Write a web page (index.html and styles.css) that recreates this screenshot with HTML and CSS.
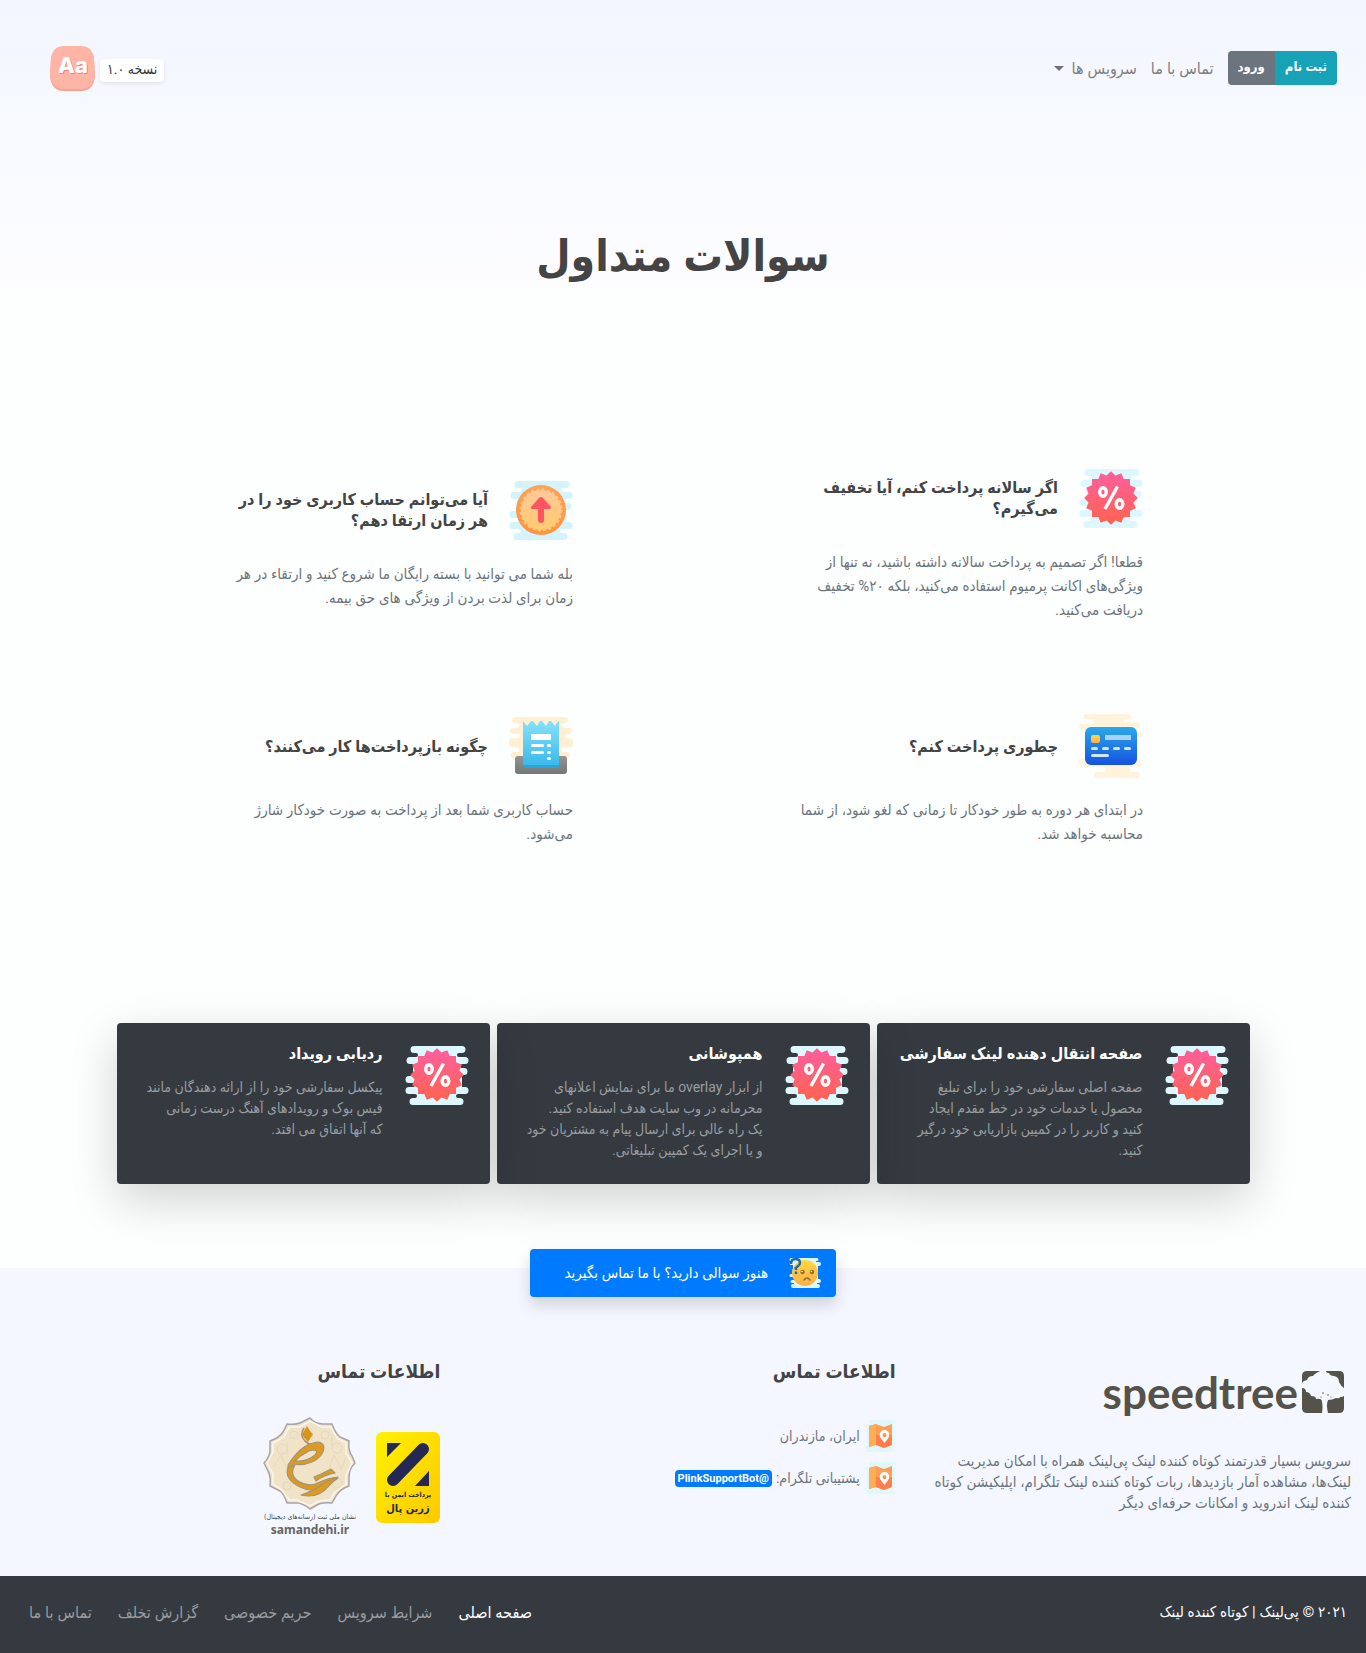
FILE: index.html
```html
<!DOCTYPE html>
<html lang="fa" dir="rtl">
<head>
<meta charset="utf-8">
<meta name="viewport" content="width=device-width, initial-scale=1">
<title>سوالات متداول</title>
<link rel="stylesheet" href="styles.css">
</head>
<body>
<svg class="defs" width="0" height="0" aria-hidden="true">
  <defs>
    <linearGradient id="pink" x1="0" y1="0" x2="0" y2="1"><stop offset="0" stop-color="#fc5fa0"/><stop offset="1" stop-color="#ff634d"/></linearGradient>
    <linearGradient id="orange" x1="0" y1="0" x2="0" y2="1"><stop offset="0" stop-color="#ffa352"/><stop offset="1" stop-color="#ff9245"/></linearGradient>
    <linearGradient id="peach" x1="0" y1="0" x2="0" y2="1"><stop offset="0" stop-color="#ffc99a"/><stop offset="1" stop-color="#ffcb70"/></linearGradient>
    <linearGradient id="blue" x1="0" y1="0" x2="0" y2="1"><stop offset="0" stop-color="#2ba8ec"/><stop offset="1" stop-color="#1552df"/></linearGradient>
    <linearGradient id="gold" x1="0" y1="0" x2="0" y2="1"><stop offset="0" stop-color="#ffd93b"/><stop offset="1" stop-color="#ffae4c"/></linearGradient>
    <linearGradient id="paper" x1="0" y1="0" x2="0" y2="1"><stop offset="0" stop-color="#86e1fb"/><stop offset="1" stop-color="#3cb9ea"/></linearGradient>
    <linearGradient id="grey" x1="0" y1="0" x2="0" y2="1"><stop offset="0" stop-color="#949494"/><stop offset="1" stop-color="#767676"/></linearGradient>
    <linearGradient id="yellow" x1="0" y1="0" x2="1" y2="1"><stop offset="0" stop-color="#fff200"/><stop offset="1" stop-color="#ffc800"/></linearGradient>
    <clipPath id="burst">
      <rect x="13" y="13" width="38" height="38"/>
      <rect x="13" y="13" width="38" height="38" transform="rotate(22.5 32 32)"/>
      <rect x="13" y="13" width="38" height="38" transform="rotate(45 32 32)"/>
      <rect x="13" y="13" width="38" height="38" transform="rotate(67.5 32 32)"/>
    </clipPath>
    <symbol id="cloud" viewBox="0 0 64 64">
      <path d="M9 3H57a3 3 0 0 1 0 7H54a2 2 0 0 0 0 4H60a3.500 3.500 0 0 1 0 7H57a2 2 0 0 0 0 4H59a3.500 3.500 0 0 1 0 7H57V44H60a3.500 3.500 0 0 1 0 7H53a2 2 0 0 0 0 4H55a3.500 3.500 0 0 1 0 7H8a3.500 3.500 0 0 1 0-7H10a2 2 0 0 0 0-4H4a3.500 3.500 0 0 1 0-7H8a2 2 0 0 0 0-4H4a3.500 3.500 0 0 1 0-7H8V21H5a3.500 3.500 0 0 1 0-7H11a2 2 0 0 0 0-4H9a3.500 3.500 0 0 1 0-7Z"/>
    </symbol>
    <symbol id="discount" viewBox="0 0 64 64">
      <use href="#cloud" fill="#ddf7fe"/>
      <g clip-path="url(#burst)"><rect x="4" y="4" width="56" height="56" fill="url(#pink)"/></g>
      <g fill="none" stroke="#fff" stroke-width="3.400"><ellipse cx="24" cy="26" rx="3.300" ry="4.300"/><ellipse cx="40.500" cy="38" rx="3.300" ry="4.300"/><path d="M38.500 20.500 26 43"/></g>
    </symbol>
    <symbol id="map" viewBox="0 0 32 32">
      <path fill="#dff8fe" d="M5 0H32V3H29V6H31V26H28V29H30V32H3V29H1V26H3V8H1V5H5Z"/>
      <path fill="#ff9d55" d="M5 6 12 4 20 7 28 4V25L20 28 12 25 5 27Z"/>
      <path fill="#ffad55" d="M5 6 12 4V25L5 27Z"/>
      <path fill="#ff7446" d="M12 15H28V25L20 28 12 25Z" opacity=".75"/>
      <path fill="#fff" fill-rule="evenodd" d="M20.500 10a4.800 4.800 0 0 0-4.800 5c0 3 3 5 4.800 8 1.800-3 4.800-5 4.800-8a4.800 4.800 0 0 0-4.800-5Zm0 3a2 2 0 1 1 0 4 2 2 0 0 1 0-4Z"/>
    </symbol>
  </defs>
</svg>

<header class="hero">
  <nav class="topbar">
    <div class="menu">
      <div class="auth">
        <button class="auth-btn signup" type="button">ثبت نام</button>
        <button class="auth-btn login" type="button">ورود</button>
      </div>
      <a class="menu-link" href="#contact">تماس با ما</a>
      <a class="menu-link has-caret" href="#services">سرویس ها</a>
    </div>
    <div class="brand">
      <span class="version">نسخه ۱.۰</span>
      <svg class="brand-icon" viewBox="0 0 45 45" role="img" aria-label="Aa">
        <path fill="#fa9f92" d="M14 1H31Q42 1 44 13L45 31Q43 45 31 45H14Q2 45 0 31L1 13Q3 1 14 1Z"/>
        <path fill="#ffb5a5" d="M14 0H31Q42 0 44 12L45 29Q43 43 31 43H14Q2 43 0 29L1 12Q3 0 14 0Z"/>
        <text class="aa-shadow" x="24" y="28" text-anchor="middle">Aa</text>
        <text class="aa" x="23" y="27" text-anchor="middle">Aa</text>
      </svg>
    </div>
  </nav>
  <h1 class="title">سوالات متداول</h1>
</header>

<main>
  <section class="faq">
    <article class="question">
      <div class="question-head">
        <svg class="icon" viewBox="0 0 64 64" aria-hidden="true"><use href="#discount"/></svg>
        <h2>اگر سالانه پرداخت کنم، آیا تخفیف<br>می‌گیرم؟</h2>
      </div>
      <p>قطعا! اگر تصمیم به پرداخت سالانه داشته باشید، نه تنها از<br>ویژگی‌های اکانت پرمیوم استفاده می‌کنید، بلکه ۲۰% تخفیف<br>دریافت می‌کنید.</p>
    </article>
    <article class="question">
      <div class="question-head">
        <svg class="icon" viewBox="0 0 64 64" aria-hidden="true">
          <use href="#cloud" fill="#d3f4fd"/>
          <circle cx="32" cy="32" r="25" fill="url(#orange)"/>
          <circle cx="32" cy="32" r="20" fill="url(#peach)"/>
          <circle cx="32" cy="32" r="20.500" fill="none" stroke="url(#peach)" stroke-width="2" stroke-dasharray="3 2.370"/>
          <path fill="#ff5560" d="M32 19Q33 19 34 20L42 29Q42 31 41 31H35V42a3 3 0 0 1-6 0V31H23Q21 30 22 29L30 20Q31 19 32 19Z"/>
        </svg>
        <h2>آیا می‌توانم حساب کاربری خود را در<br>هر زمان ارتقا دهم؟</h2>
      </div>
      <p>بله شما می توانید با بسته رایگان ما شروع کنید و ارتقاء در هر<br>زمان برای لذت بردن از ویژگی های حق بیمه.</p>
    </article>
    <article class="question">
      <div class="question-head">
        <svg class="icon" viewBox="0 0 64 64" aria-hidden="true">
          <path fill="#fff3dc" d="M7 0H50a2.500 2.500 0 0 1 0 5H46a1.500 1.500 0 0 0 0 3H58a3 3 0 0 1 0 6H55V18H61a2.500 2.500 0 0 1 0 5H55V45H58a4 4 0 0 1 0 8H53a2 2 0 0 0 0 5H58a3 3 0 0 1 0 6H18a3 3 0 0 1 0-6H24a2 2 0 0 0 0-5H4a4 4 0 0 1 0-8H9V16H3a3 3 0 0 1 0-6H12a2.500 2.500 0 0 0 0-5H7a2.500 2.500 0 0 1 0-5Z"/>
          <rect x="6" y="13" width="52" height="38" rx="6" fill="url(#blue)"/>
          <rect x="12" y="21" width="9" height="8" rx="2" fill="url(#gold)"/>
          <path fill="#a5d4f8" d="M26 21H52V26H26Z"/>
          <path stroke="#cfe7fb" stroke-width="3" stroke-linecap="round" d="M13.500 34.500H17.500M24.500 34.500H28.500M35.500 34.500H39.500M46.500 34.500H50.500M13.500 41.500H28.500"/>
        </svg>
        <h2>چطوری پرداخت کنم؟</h2>
      </div>
      <p>در ابتدای هر دوره به طور خودکار تا زمانی که لغو شود، از شما<br>محاسبه خواهد شد.</p>
    </article>
    <article class="question">
      <div class="question-head">
        <svg class="icon" viewBox="0 0 64 64" aria-hidden="true">
          <path fill="#ffefd3" d="M6 3H56a3 3 0 0 1 0 6H55a2 2 0 0 0 0 5H60a3 3 0 0 1 0 6H58a2 2 0 0 0 0 4H60a4 4 0 0 1 0 9H55a2 2 0 0 0 0 5H58a3 3 0 0 1 0 6H5a3 3 0 0 1 0-6H8a2 2 0 0 0 0-5H4a4 4 0 0 1 0-9H9a2 2 0 0 0 0-4H4a3 3 0 0 1 0-6H8a2 2 0 0 0 0-5H6a3 3 0 0 1 0-6Z"/>
          <rect x="6" y="42" width="52" height="18" rx="3" fill="url(#grey)"/>
          <path fill="url(#paper)" d="M14 7 18 12 22 7H24L28 12 31 7H33L37 12 40 7H42L46 12 49 7H50V51H14Z"/>
          <path fill="#22a8df" d="M14 51H50V52a2.500 2.500 0 0 1-2.500 2H16.500A2.500 2.500 0 0 1 14 52Z"/>
          <rect x="22" y="20" width="20" height="6" rx="1" fill="#fff"/>
          <path stroke="#fff" stroke-width="3" stroke-linecap="round" d="M23.500 31.500H33.500M23.500 38.500H33.500M39.500 31.500H40.500M39.500 38.500H40.500M39.500 44.500H40.500"/>
        </svg>
        <h2>چگونه بازپرداخت‌ها کار می‌کنند؟</h2>
      </div>
      <p>حساب کاربری شما بعد از پرداخت به صورت خودکار شارژ<br>می‌شود.</p>
    </article>
  </section>

  <section class="cards" id="services">
    <article class="card">
      <svg class="icon" viewBox="0 0 64 64" aria-hidden="true"><use href="#discount"/></svg>
      <div class="card-text">
        <h3>صفحه انتقال دهنده لینک سفارشی</h3>
        <p>صفحه اصلی سفارشی خود را برای تبلیغ<br>محصول یا خدمات خود در خط مقدم ایجاد<br>کنید و کاربر را در کمپین بازاریابی خود درگیر<br>کنید.</p>
      </div>
    </article>
    <article class="card">
      <svg class="icon" viewBox="0 0 64 64" aria-hidden="true"><use href="#discount"/></svg>
      <div class="card-text">
        <h3>همپوشانی</h3>
        <p>از ابزار overlay ما برای نمایش اعلانهای<br>محرمانه در وب سایت هدف استفاده کنید.<br>یک راه عالی برای ارسال پیام به مشتریان خود<br>و یا اجرای یک کمپین تبلیغاتی.</p>
      </div>
    </article>
    <article class="card">
      <svg class="icon" viewBox="0 0 64 64" aria-hidden="true"><use href="#discount"/></svg>
      <div class="card-text">
        <h3>ردیابی رویداد</h3>
        <p>پیکسل سفارشی خود را از ارائه دهندگان مانند<br>فیس بوک و رویدادهای آهنگ درست زمانی<br>که آنها اتفاق می افتد.</p>
      </div>
    </article>
  </section>
</main>

<footer class="footer">
  <a class="ask" href="#contact">
    <svg class="icon-small" viewBox="0 0 32 32" aria-hidden="true">
      <path fill="#ddf7fe" d="M2 1H28a1.500 1.500 0 0 1 0 3H27V5H30a1.500 1.500 0 0 1 0 4H29V22H30a1.500 1.500 0 0 1 0 4H28V27H29a2 2 0 0 1 0 4H4a2 2 0 0 1 0-4H5V26H3a1.500 1.500 0 0 1 0-3H5V20H2a1.500 1.500 0 0 1 0-3H4V8H2A1.500 1.500 0 0 1 2 5H3V4H2a1.500 1.500 0 0 1 0-3Z"/>
      <circle cx="16" cy="16" r="13" fill="url(#gold)"/>
      <path fill="none" stroke="#1f68b5" stroke-width="2.500" d="M2 7Q2 2 6.500 2T11 6Q11 8 8.500 9.500T7 12V13M7 14.500V17"/>
      <path fill="none" stroke="#8b6b45" stroke-width="1.500" stroke-linecap="round" d="M15 23Q18 19 21 23"/>
      <circle cx="13.500" cy="15" r="2.200" fill="#8b6b45"/><circle cx="23" cy="15" r="2.200" fill="#8b6b45"/><circle cx="13" cy="14.500" r=".8" fill="#fff"/><circle cx="22.500" cy="14.500" r=".8" fill="#fff"/>
    </svg>
    <span>هنوز سوالی دارید؟ با ما تماس بگیرید</span>
  </a>
  <div class="footer-cols">
    <section class="footer-col about">
      <div class="logo" dir="ltr">
        <span class="logo-name">speedtree</span>
        <svg class="logo-mark" viewBox="0 0 42 42" aria-hidden="true">
          <path fill="#555349" d="M5 0H18Q12 3 11 5 6 5 5 9 0 10 0 13V5Q0 0 5 0ZM24 0H37Q42 0 42 5V17Q39 15 37 11 37 6 32 5 28 5 27 2 24 2 24 0ZM0 17Q4 17 4 21 8 21 9 25 14 25 14 28 20 27 20 31 21 35 20 42H5Q0 42 0 37ZM42 25V37Q42 42 37 42H26Q24 34 26 29 30 29 34 27 38 28 38 26 41 26 42 25Z"/>
          <circle cx="21" cy="22" r=".8" fill="#555349"/><circle cx="19" cy="26" r=".6" fill="#555349"/><circle cx="26" cy="24" r=".8" fill="#555349"/><circle cx="29" cy="26" r=".6" fill="#555349"/>
        </svg>
      </div>
      <p>سرویس بسیار قدرتمند کوتاه کننده لینک پی‌لینک همراه با امکان مدیریت<br>لینک‌ها، مشاهده آمار بازدیدها، ربات کوتاه کننده لینک تلگرام، اپلیکیشن کوتاه<br>کننده لینک اندروید و امکانات حرفه‌ای دیگر</p>
    </section>
    <section class="footer-col" id="contact">
      <h4>اطلاعات تماس</h4>
      <ul class="contacts">
        <li><svg class="icon-small" viewBox="0 0 32 32" aria-hidden="true"><use href="#map"/></svg><span>ایران، مازندران</span></li>
        <li><svg class="icon-small" viewBox="0 0 32 32" aria-hidden="true"><use href="#map"/></svg><span>پشتیبانی تلگرام:</span><a class="badge" href="#telegram">@PlinkSupportBot</a></li>
      </ul>
    </section>
    <section class="footer-col">
      <h4>اطلاعات تماس</h4>
      <div class="seals">
        <svg class="zarinpal" viewBox="0 0 64 91" role="img" aria-label="زرین پال">
          <rect width="64" height="91" rx="6" fill="url(#yellow)"/>
          <path fill="#242852" d="M11 11H25L11 25ZM53 39V54H39Z"/>
          <path stroke="#242852" stroke-width="12" stroke-linecap="round" d="M17 48 47 17"/>
          <text class="zp-small" x="32" y="65" text-anchor="middle">پرداخت ایمن با</text>
          <text class="zp-big" x="32" y="80" text-anchor="middle">زرین پال</text>
        </svg>
        <svg class="samandehi" viewBox="0 0 96 121" role="img" aria-label="نشان ملی ثبت">
          <path fill="#f0e3c8" stroke="#aaa4a8" stroke-width="1.500" stroke-linejoin="round" d="M48 1Q53 7 61 7L70 7Q73 16 78 20L87 24Q86 34 90 39L93 46Q87 52 87 60V69Q78 72 74 79L70 86Q60 85 55 88L48 92Q41 86 34 86H25Q22 77 18 74L8 69Q9 59 6 54L2 46Q8 40 8 33V24Q17 21 21 15L25 7Q35 8 40 5Z"/>
          <path fill="none" stroke="#fff" stroke-width="1.500" opacity=".7" d="M48 4 60 10 69 10 75 21 84 26 84 36 90 46 84 59 84 67 73 75 68 83 57 84 48 89 35 83 27 83 20 73 11 67 11 57 5 46 11 35 11 26 22 20 27 10 38 10Z"/>
          <g fill="none" stroke="#e4d4b4" stroke-width="1" opacity=".7"><circle cx="20" cy="32" r="5"/><circle cx="32" cy="18" r="4"/><circle cx="63" cy="18" r="4"/><circle cx="75" cy="31" r="5"/><circle cx="75" cy="66" r="5"/><circle cx="25" cy="69" r="4"/><path d="M12 50 19 38 25 53 32 42M67 51 72 38 79 52 84 40M25 25V38M70 17V29M50 12V24"/></g>
          <path fill="none" stroke="#a39478" stroke-width="1.500" d="M42 11Q37 18 43 24 50 28 44 36M46 26Q54 30 40 38"/>
          <g stroke="#a39478" stroke-width="1.200" stroke-linejoin="round" fill="#dc9a20">
            <path d="M26 48Q38 29 51 26 61 23 62 31 61 40 50 45 40 49 32 47L26 51ZM33 44Q45 45 53 38 57 33 51 33 43 34 33 44Z"/>
            <path d="M33 48Q27 58 36 64 47 71 58 65 66 61 76 60 70 62 64 68 52 77 38 70 22 62 26 51Z"/>
            <path d="M39 78Q51 74 58 69 66 63 76 61 70 65 66 70 56 82 39 78Z"/>
            <path d="M52 60Q60 57 69 52L73 56Q62 58 54 64Z"/>
          </g>
          <path fill="#d99318" d="M45 9Q49 16 51 17L46 25Q40 19 40 17Z"/>
          <text class="sm-fa" x="48" y="102" text-anchor="middle">نشان ملی ثبت (رسانه‌های دیجیتال)</text>
          <text class="sm-en" x="48" y="117" text-anchor="middle" direction="ltr">samandehi.ir</text>
        </svg>
      </div>
    </section>
  </div>
  <div class="bottom">
    <span class="copyright">۲۰۲۱ © پی‌لینک | کوتاه کننده لینک</span>
    <nav class="bottom-links">
      <a class="active" href="#home">صفحه اصلی</a>
      <a href="#terms">شرایط سرویس</a>
      <a href="#privacy">حریم خصوصی</a>
      <a href="#report">گزارش تخلف</a>
      <a href="#contact">تماس با ما</a>
    </nav>
  </div>
</footer>
</body>
</html>
```
FILE: styles.css
```css
* { box-sizing: border-box; }

body {
  margin: 0;
  background: #fdfefe;
  color: #444;
  font-family: Roboto, "DejaVu Sans Condensed", "DejaVu Sans", sans-serif;
  font-size: 15px;
  line-height: 21px;
}

h1, h2, h3, h4, p, ul { margin: 0; padding: 0; }
a { color: inherit; text-decoration: none; }
p, h2, h3 { white-space: nowrap; }
.defs { position: absolute; }
.icon { width: 64px; height: 64px; flex: none; }
.icon-small { width: 32px; height: 32px; flex: none; }

.hero {
  padding-top: 46px;
  background: linear-gradient(#f3f6ff, #fdfdff);
}
.topbar { display: flex; justify-content: space-between; align-items: flex-start; padding: 0 29px 0 50px; }
.menu { display: flex; align-items: center; gap: 14px; margin-top: 5px; }
.menu-link { color: #808184; font-size: 16px; }
.auth { display: flex; border-radius: 4px; overflow: hidden; }
.auth-btn {
  height: 34px;
  padding: 0 10px 4px;
  border: 0;
  color: #fff;
  font-family: inherit;
  font-size: 13px;
  font-weight: bold;
  line-height: 21px;
}
.signup { background: #17a2b8; }
.login { background: #6c757d; }
.has-caret { display: flex; align-items: center; gap: 8px; }
.has-caret::after { content: ""; border: 5px solid transparent; border-top-color: #707174; border-bottom: 0; }
.brand { display: flex; align-items: center; gap: 5px; }
.brand-icon { width: 45px; height: 45px; }
.aa, .aa-shadow { font: 800 22px Inter, sans-serif; fill: #fff; }
.aa-shadow { fill: #f4857f; }
.version {
  height: 23px;
  margin-top: 3px;
  padding: 0 7px;
  border-radius: 4px;
  background: #fff;
  box-shadow: 0 2px 4px rgba(0, 0, 0, .08);
  color: #343a40;
  font-size: 14px;
}
.title { margin-top: 130px; font-size: 44px; line-height: 70px; text-align: center; }

.faq {
  display: grid;
  grid-template-columns: 1fr 1fr;
  align-items: center;
  row-gap: 92px;
  max-width: 1140px;
  margin: 0 auto;
  padding: 175px 0 177px;
}
.question { padding-right: 110px; }
.question-head { display: flex; align-items: center; gap: 21px; }
.question h2 { font-size: 16px; line-height: 21px; }
.question p { margin-top: 20px; color: #6c757d; line-height: 24px; }

.cards {
  display: grid;
  grid-template-columns: repeat(3, minmax(0, 1fr));
  gap: 7px;
  max-width: 1133px;
  margin: 0 auto 84px;
}
.card {
  display: flex;
  gap: 22px;
  min-height: 161px;
  padding: 20px 21px;
  border-radius: 4px;
  background: #343a40;
  box-shadow: 0 16px 48px rgba(0, 0, 0, .175);
}
.card h3 { margin-bottom: 13px; color: #fff; font-size: 16px; line-height: 21px; }
.card p { color: #9a9da0; font-size: 14px; }

.footer { display: flex; flex-direction: column; background: #f4f7ff; }
.ask {
  display: flex;
  align-items: center;
  align-self: center;
  gap: 21px;
  width: 306px;
  height: 48px;
  margin-top: -19px;
  padding: 0 15px;
  border-radius: 4px;
  background: #007bff;
  box-shadow: 0 8px 16px rgba(0, 0, 0, .15);
  color: #fff;
  white-space: nowrap;
}
.footer-cols { display: grid; grid-template-columns: repeat(3, minmax(0, 1fr)); min-height: 279px; padding-top: 61px; }
.footer-col { padding: 0 15px; }
.footer-col h4 { font-size: 19px; line-height: 28px; }
.about p { margin-top: 38px; color: #6c757d; }
.logo { display: flex; justify-content: flex-end; align-items: center; gap: 4px; height: 42px; margin-top: 13px; padding-right: 7px; }
.logo-name { color: #555349; font: bold 44px/42px Lato, sans-serif; }
.logo-mark { width: 42px; height: 42px; }
.contacts { display: grid; gap: 10px; margin-top: 34px; list-style: none; }
.contacts li { display: flex; align-items: center; gap: 4px; color: #6c757d; font-size: 14px; }
.badge { padding: 0 3px; border-radius: 4px; background: #007bff; color: #fff; font-size: 11px; font-weight: bold; line-height: 17px; }
.seals { display: flex; align-items: center; gap: 18px; margin-top: 31px; }
.zarinpal { width: 64px; height: 91px; }
.samandehi { width: 96px; height: 121px; }
.seals text { font-family: "DejaVu Sans Condensed", "DejaVu Sans", sans-serif; font-weight: bold; }
.zp-small { font-size: 7px; fill: #242852; }
.zp-big { font-size: 11px; fill: #242852; }
.seals .sm-fa { font-size: 7px; font-weight: normal; fill: #444; }
.seals .sm-en { font-family: "Noto Sans", sans-serif; font-size: 12px; fill: #666; }

.bottom {
  display: flex;
  justify-content: space-between;
  align-items: center;
  min-height: 77px;
  padding: 0 19px 4px 29px;
  background: #343a40;
  color: #fff;
}
.bottom-links { display: flex; gap: 26px; color: #999c9f; font-size: 16px; }
.bottom-links .active { color: #fff; }
```
